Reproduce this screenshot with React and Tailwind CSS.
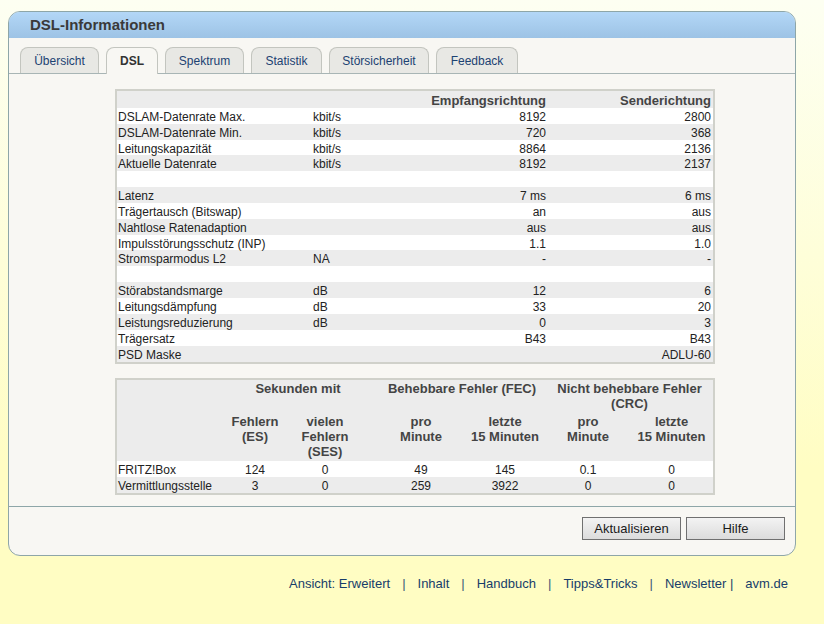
import React from 'react';

const tabs = [
  { label: 'Übersicht', w: 'w-[79px]' },
  { label: 'DSL', w: 'w-[52px]', active: true },
  { label: 'Spektrum', w: 'w-[79px]' },
  { label: 'Statistik', w: 'w-[71px]' },
  { label: 'Störsicherheit', w: 'w-[100px]' },
  { label: 'Feedback', w: 'w-[82px]' },
];

const rows = [
  ['DSLAM-Datenrate Max.', 'kbit/s', '8192', '2800'],
  ['DSLAM-Datenrate Min.', 'kbit/s', '720', '368'],
  ['Leitungskapazität', 'kbit/s', '8864', '2136'],
  ['Aktuelle Datenrate', 'kbit/s', '8192', '2137'],
  ['', '', '', ''],
  ['Latenz', '', '7 ms', '6 ms'],
  ['Trägertausch (Bitswap)', '', 'an', 'aus'],
  ['Nahtlose Ratenadaption', '', 'aus', 'aus'],
  ['Impulsstörungsschutz (INP)', '', '1.1', '1.0'],
  ['Stromsparmodus L2', 'NA', '-', '-'],
  ['', '', '', ''],
  ['Störabstandsmarge', 'dB', '12', '6'],
  ['Leitungsdämpfung', 'dB', '33', '20'],
  ['Leistungsreduzierung', 'dB', '0', '3'],
  ['Trägersatz', '', 'B43', 'B43'],
  ['PSD Maske', '', '', 'ADLU-60'],
];

const errors = [
  ['FRITZ!Box', '124', '0', '49', '145', '0.1', '0'],
  ['Vermittlungsstelle', '3', '0', '259', '3922', '0', '0'],
];

const grid2 = 'grid grid-cols-[121px_34px_106px_86px_82px_84px_83px]';

const Cell = ({ children, className = '' }) => (
  <div className={`flex flex-col items-center ${className}`}>{children}</div>
);

const App = () => {
  return (
    <div className="min-h-[624px] bg-gradient-to-b from-[#fdfff2] to-[#fffdc3] to-75% pt-[11px] pb-[20px] font-['Liberation_Sans',Arial,sans-serif] text-[#222]">
      {/* Hauptfenster */}
      <div className="ml-[8px] w-[788px] border border-[#8ea6a8] rounded-[12px] overflow-hidden bg-[#f8f7f3]">
        <div className="h-[26px] pl-[21px] flex items-center bg-gradient-to-b from-[#b3d7f7] to-[#9dc3e5]">
          <h1 className="text-[15px] font-bold text-[#3a3a3a]">DSL-Informationen</h1>
        </div>

        {/* Reiter */}
        <div className="pt-[9px] pl-[11px] flex items-end gap-[7px] border-b border-[#a8b5b5]">
          {tabs.map(t => (
            <div
              key={t.label}
              className={`${t.w} flex items-center justify-center rounded-t-[8px] border border-b-0 border-[#c3c5bf] text-[12px] ${t.active ? 'h-[27px] -mb-px bg-[#f8f7f3] font-bold text-[#333]' : 'h-[26px] bg-[#e8e8e4] text-[#1c4272]'}`}
            >
              {t.label}
            </div>
          ))}
        </div>

        {/* Übersichtstabelle */}
        <div className="mt-[15px] ml-[106px] w-[600px] border-2 border-[#d0d1ca] text-[12px]">
          <div className="grid grid-cols-[196px_83px_150px_167px] h-[17px] items-center bg-[#ececec] text-[13px] font-bold text-[#444]">
            <span></span>
            <span></span>
            <span className="text-right">Empfangsrichtung</span>
            <span className="text-right pr-[2px]">Senderichtung</span>
          </div>
          {rows.map((r, i) => (
            <div key={i} className={`grid grid-cols-[196px_83px_150px_167px] ${i === 2 || i === 8 ? 'h-[15px]' : 'h-[16px]'} items-center ${i % 2 === 0 ? 'bg-white' : 'bg-[#ececec]'}`}>
              <span className="pl-[1px]">{r[0]}</span>
              <span>{r[1]}</span>
              <span className="text-right">{r[2]}</span>
              <span className="text-right pr-[2px]">{r[3]}</span>
            </div>
          ))}
        </div>

        {/* Fehlertabelle */}
        <div className="mt-[14px] ml-[106px] w-[600px] border-2 border-[#d0d1ca] text-[12px]">
          <div className="bg-[#ececec] text-[13px] font-bold text-[#444] leading-[15px]">
            <div className={`${grid2} h-[34px] pt-[1px]`}>
              <span></span>
              <Cell className="col-span-2 pr-[20px]">Sekunden mit</Cell>
              <Cell className="col-span-2">Behebbare Fehler (FEC)</Cell>
              <Cell className="col-span-2 text-center">
                <span>Nicht behebbare Fehler</span>
                <span>(CRC)</span>
              </Cell>
            </div>
            <div className={`${grid2} h-[47px]`}>
              <span></span>
              <Cell><span>Fehlern</span><span>(ES)</span></Cell>
              <Cell><span>vielen</span><span>Fehlern</span><span>(SES)</span></Cell>
              <Cell><span>pro</span><span>Minute</span></Cell>
              <Cell><span>letzte</span><span className="whitespace-nowrap">15 Minuten</span></Cell>
              <Cell><span>pro</span><span>Minute</span></Cell>
              <Cell><span>letzte</span><span className="whitespace-nowrap">15 Minuten</span></Cell>
            </div>
          </div>
          {errors.map((r, i) => (
            <div key={r[0]} className={`${grid2} h-[16px] items-center ${i % 2 === 0 ? 'bg-white' : 'bg-[#ececec]'}`}>
              <span className="pl-[1px]">{r[0]}</span>
              {r.slice(1).map((v, j) => (
                <Cell key={j}>{v}</Cell>
              ))}
            </div>
          ))}
        </div>

        {/* Buttons */}
        <div className="mt-[11px] border-t border-[#8ea6a8] pt-[10px] pb-[15px] pr-[10px] flex justify-end gap-[5px]">
          <button className="w-[99px] h-[23px] border border-[#707070] bg-gradient-to-b from-[#f3f3f3] to-[#dcdcdc] text-[13px] text-[#1a1a1a]">
            Aktualisieren
          </button>
          <button className="w-[99px] h-[23px] border border-[#707070] bg-gradient-to-b from-[#f3f3f3] to-[#dcdcdc] text-[13px] text-[#1a1a1a]">
            Hilfe
          </button>
        </div>
      </div>

      {/* Fußzeile */}
      <div className="mt-[20px] pr-[36px] flex justify-end text-[13px] leading-[16px] text-[#173d6a]">
        <span>Ansicht: Erweitert</span>
        <span className="mx-[12px] text-[#3b5a78]">|</span>
        <span>Inhalt</span>
        <span className="mx-[12px] text-[#3b5a78]">|</span>
        <span>Handbuch</span>
        <span className="mx-[12px] text-[#3b5a78]">|</span>
        <span>Tipps&amp;Tricks</span>
        <span className="mx-[12px] text-[#3b5a78]">|</span>
        <span>Newsletter |</span>
        <span className="ml-[12px]">avm.de</span>
      </div>
    </div>
  );
};

export default App;
